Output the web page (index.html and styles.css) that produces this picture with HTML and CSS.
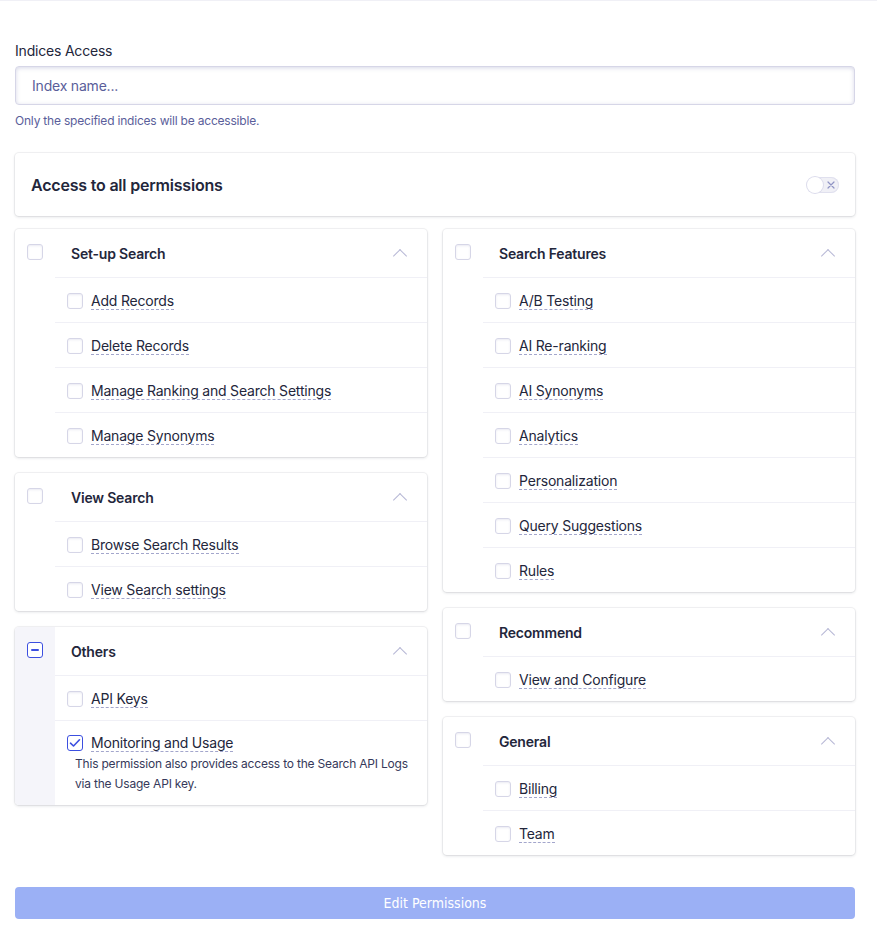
FILE: index.html
```html
<!DOCTYPE html>
<html lang="en">
<head>
    <meta charset="UTF-8">
    <meta name="viewport" content="width=device-width, initial-scale=1.0">
    <title>Edit Permissions</title>
    <link rel="stylesheet" href="styles.css">
</head>
<body>
    <div class="page">
        <label class="field-label" for="indices">Indices Access</label>
        <input type="text" id="indices" class="field-input" placeholder="Index name...">
        <p class="field-help">Only the specified indices will be accessible.</p>

        <div class="card all-card">
            <span class="all-title">Access to all permissions</span>
            <span class="toggle">
                <span class="knob"></span>
                <svg class="toggle-x" width="8" height="8" viewBox="0 0 8 8"><path d="M1 1L7 7M7 1L1 7" stroke="#8f93c4" stroke-width="1.2" stroke-linecap="round"/></svg>
            </span>
        </div>

        <div class="columns">
            <div class="column">
                <div class="card group">
                    <div class="gutter"><span class="box"></span></div>
                    <div class="group-body">
                        <div class="group-head"><span class="group-title">Set-up Search</span><span class="chevron"></span></div>
                        <div class="item"><span class="box"></span><span class="item-label">Add Records</span></div>
                        <div class="item"><span class="box"></span><span class="item-label">Delete Records</span></div>
                        <div class="item"><span class="box"></span><span class="item-label">Manage Ranking and Search Settings</span></div>
                        <div class="item"><span class="box"></span><span class="item-label">Manage Synonyms</span></div>
                    </div>
                </div>
                <div class="card group">
                    <div class="gutter"><span class="box"></span></div>
                    <div class="group-body">
                        <div class="group-head"><span class="group-title">View Search</span><span class="chevron"></span></div>
                        <div class="item"><span class="box"></span><span class="item-label">Browse Search Results</span></div>
                        <div class="item"><span class="box"></span><span class="item-label">View Search settings</span></div>
                    </div>
                </div>
                <div class="card group">
                    <div class="gutter partial"><span class="box box-on"><span class="minus"></span></span></div>
                    <div class="group-body">
                        <div class="group-head"><span class="group-title">Others</span><span class="chevron"></span></div>
                        <div class="item"><span class="box"></span><span class="item-label">API Keys</span></div>
                        <div class="item item-tall">
                            <div class="item-line">
                                <span class="box box-on">
                                    <svg width="12" height="10" viewBox="0 0 12 10"><path d="M1.5 5.2L4.5 8L10.5 1.8" fill="none" stroke="#3c4fe0" stroke-width="1.6" stroke-linecap="round" stroke-linejoin="round"/></svg>
                                </span>
                                <span class="item-label">Monitoring and Usage</span>
                            </div>
                            <p class="item-note">This permission also provides access to the Search API Logs via the Usage API key.</p>
                        </div>
                    </div>
                </div>
            </div>

            <div class="column">
                <div class="card group">
                    <div class="gutter"><span class="box"></span></div>
                    <div class="group-body">
                        <div class="group-head"><span class="group-title">Search Features</span><span class="chevron"></span></div>
                        <div class="item"><span class="box"></span><span class="item-label">A/B Testing</span></div>
                        <div class="item"><span class="box"></span><span class="item-label">AI Re-ranking</span></div>
                        <div class="item"><span class="box"></span><span class="item-label">AI Synonyms</span></div>
                        <div class="item"><span class="box"></span><span class="item-label">Analytics</span></div>
                        <div class="item"><span class="box"></span><span class="item-label">Personalization</span></div>
                        <div class="item"><span class="box"></span><span class="item-label">Query Suggestions</span></div>
                        <div class="item"><span class="box"></span><span class="item-label">Rules</span></div>
                    </div>
                </div>
                <div class="card group">
                    <div class="gutter"><span class="box"></span></div>
                    <div class="group-body">
                        <div class="group-head"><span class="group-title">Recommend</span><span class="chevron"></span></div>
                        <div class="item"><span class="box"></span><span class="item-label">View and Configure</span></div>
                    </div>
                </div>
                <div class="card group">
                    <div class="gutter"><span class="box"></span></div>
                    <div class="group-body">
                        <div class="group-head"><span class="group-title">General</span><span class="chevron"></span></div>
                        <div class="item"><span class="box"></span><span class="item-label">Billing</span></div>
                        <div class="item"><span class="box"></span><span class="item-label">Team</span></div>
                    </div>
                </div>
            </div>
        </div>

        <button class="submit" disabled>Edit Permissions</button>
    </div>
</body>
</html>
```

FILE: styles.css
```css
body {
    margin: 0;
    font-family: 'Inter', 'Liberation Sans', sans-serif;
    color: #23263b;
    background-color: #fff;
    border-top: 1px solid #f0f0f6;
    letter-spacing: -0.2px;
}
.page {
    padding: 40px 22px 0 15px;
}
.field-label {
    display: block;
    font-size: 14px;
    line-height: 20px;
    margin-bottom: 5px;
}
.field-input {
    box-sizing: border-box;
    width: 100%;
    height: 39px;
    padding: 0 16px;
    border: 1px solid #d6d6e7;
    border-radius: 4px;
    box-shadow: inset 0 1px 4px rgba(119, 122, 175, 0.3);
    font-family: inherit;
    font-size: 14px;
    letter-spacing: -0.2px;
    color: #23263b;
}
.field-input::placeholder {
    color: #5a5e9a;
}
.field-help {
    margin: 8px 0 0;
    font-size: 12px;
    line-height: 16px;
    color: #5a5e9a;
}
.card {
    background-color: #fff;
    border-radius: 4px;
    box-shadow: 0 0 0 1px rgba(35, 38, 59, 0.05), 0 1px 3px 0 rgba(35, 38, 59, 0.15);
}
.all-card {
    margin-top: 24px;
    height: 63px;
    padding: 0 16px;
    display: flex;
    align-items: center;
    justify-content: space-between;
}
.all-title {
    font-size: 16px;
    font-weight: 600;
}
.toggle {
    position: relative;
    width: 32px;
    height: 16px;
    border-radius: 8px;
    background-color: #f0f0f6;
    box-shadow: inset 0 0 0 1px #e0e0ee;
    display: flex;
    align-items: center;
    justify-content: flex-end;
    padding-right: 4px;
    box-sizing: border-box;
}
.knob {
    position: absolute;
    left: 0;
    top: 0;
    width: 16px;
    height: 16px;
    border-radius: 50%;
    background-color: #fff;
    box-shadow: 0 0 0 1px #dcdcec;
}
.columns {
    margin-top: 13px;
    display: grid;
    grid-template-columns: 1fr 1fr;
    gap: 16px;
    align-items: start;
}
.column {
    display: flex;
    flex-direction: column;
    gap: 16px;
}
.group {
    display: flex;
    overflow: hidden;
}
.gutter {
    width: 40px;
    flex-shrink: 0;
    padding: 15px 0 0 12px;
    box-sizing: border-box;
}
.gutter.partial {
    background-color: #f5f5fa;
}
.group-body {
    flex: 1;
}
.group-head {
    height: 48px;
    display: flex;
    align-items: center;
    justify-content: space-between;
    padding: 0 22px 0 16px;
}
.group-title {
    font-size: 14px;
    font-weight: 600;
}
.chevron {
    width: 9px;
    height: 9px;
    border-left: 1.5px solid #b6b7d5;
    border-top: 1.5px solid #b6b7d5;
    transform: rotate(45deg);
    margin-top: 6px;
}
.item {
    border-top: 1px solid #f0f0f6;
    height: 45px;
    box-sizing: border-box;
    display: flex;
    align-items: center;
    padding-left: 12px;
    padding-top: 1px;
}
.item-tall {
    height: 85px;
    flex-direction: column;
    align-items: flex-start;
    justify-content: flex-start;
    padding-top: 13px;
}
.item-line {
    display: flex;
    align-items: center;
}
.item-note {
    margin: 2px 0 0 8px;
    font-size: 12px;
    line-height: 20px;
    color: #36395a;
    padding-right: 10px;
}
.box {
    box-sizing: border-box;
    width: 16px;
    height: 16px;
    border: 1px solid #d6d6e7;
    border-radius: 3px;
    background-color: #fff;
    box-shadow: inset 0 1px 2px rgba(119, 122, 175, 0.15);
    display: flex;
    align-items: center;
    justify-content: center;
    flex-shrink: 0;
}
.box-on {
    border: 1.5px solid #3c4fe0;
    box-shadow: none;
}
.minus {
    width: 8px;
    height: 2px;
    background-color: #3c4fe0;
    border-radius: 1px;
}
.item-label {
    margin-left: 8px;
    font-size: 14px;
    border-bottom: 1px dashed #a3a6cc;
    line-height: 17px;
}
.submit {
    display: block;
    width: 100%;
    margin-top: 32px;
    height: 32px;
    border: none;
    border-radius: 4px;
    background-color: #9bb0f5;
    color: #fff;
    font-family: 'DejaVu Sans Condensed', 'DejaVu Sans', sans-serif;
    font-size: 14px;
}
```
